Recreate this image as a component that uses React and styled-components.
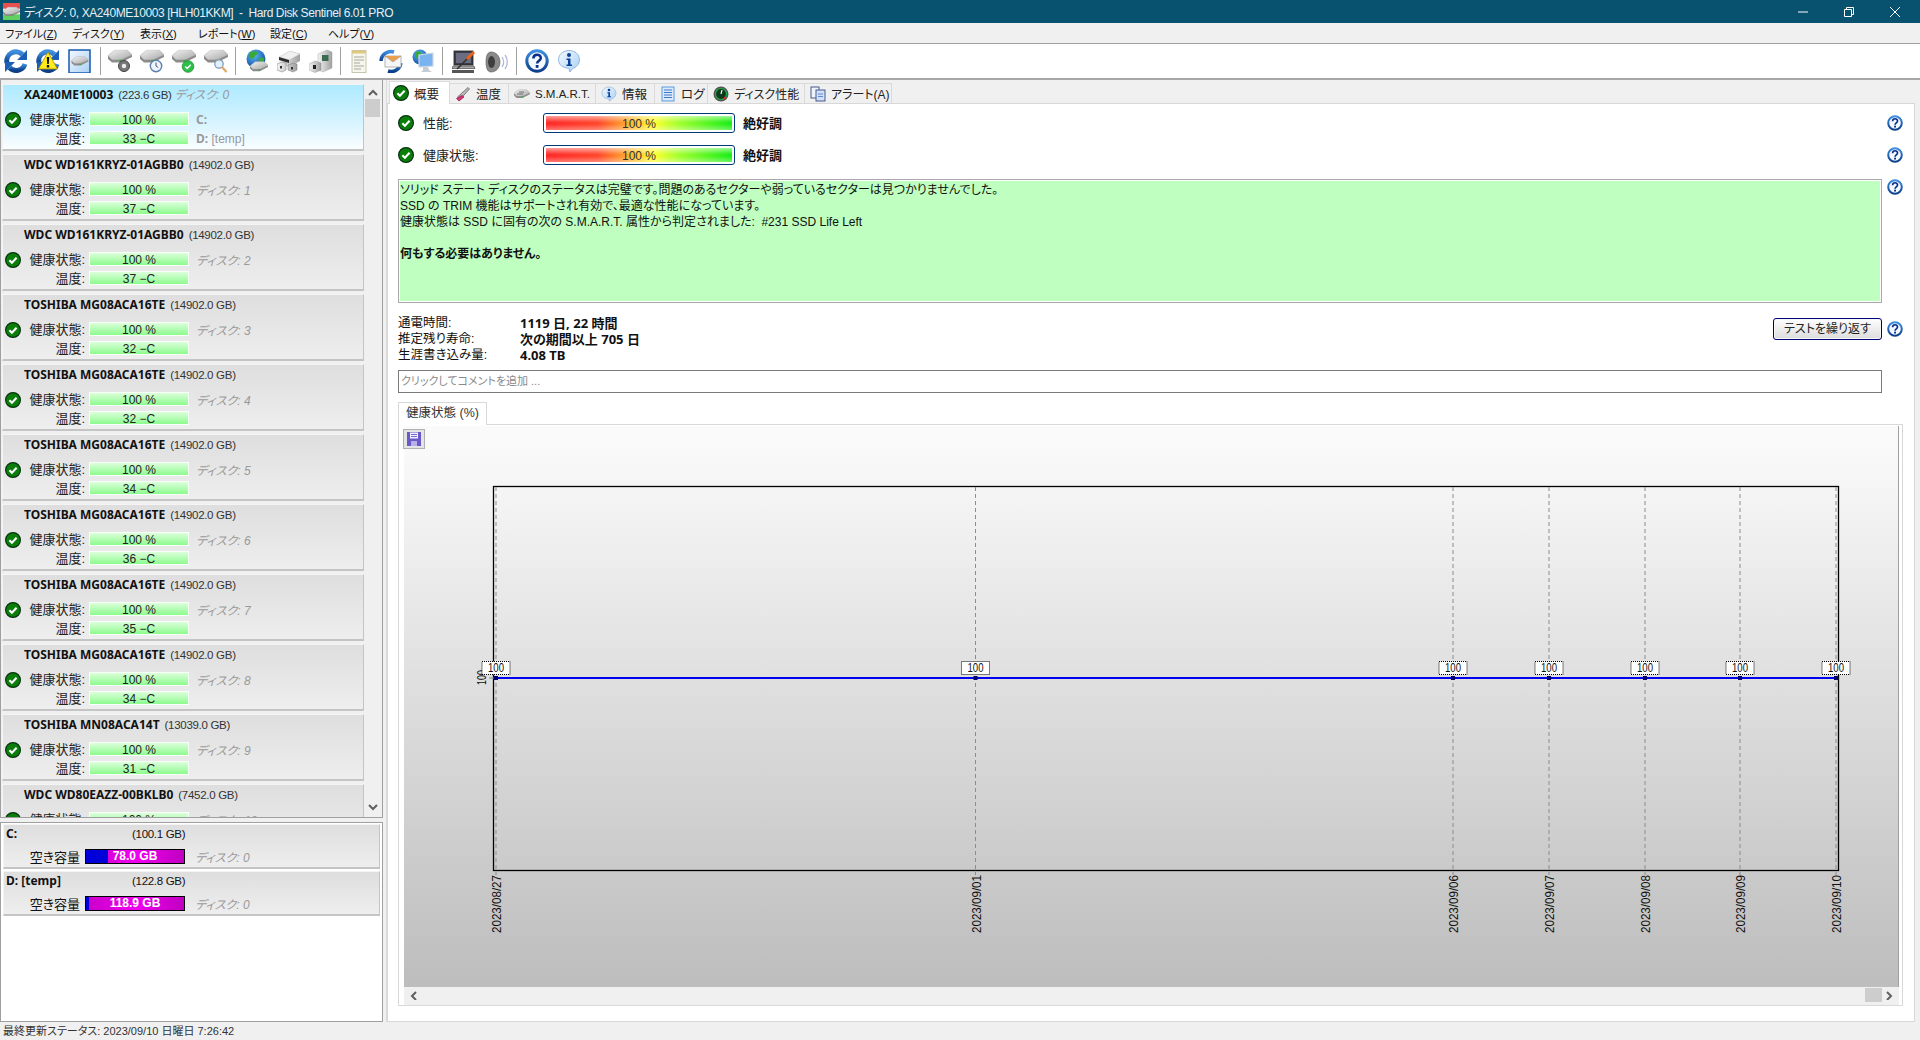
import React from 'react'
import styled, { createGlobalStyle } from 'styled-components'

const GlobalStyle = createGlobalStyle`
  html, body { margin: 0; padding: 0; background: #f0f0f0; overflow: hidden; }
  body {
    font-family: 'Liberation Sans', 'Noto Sans CJK JP', sans-serif;
    font-size: 12px;
    color: #111;
    font-feature-settings: "palt";
  }
  * { box-sizing: border-box; }
`

const Window = styled.div`
  width: 1920px;
  height: 1040px;
  display: flex;
  flex-direction: column;
  overflow: hidden;
`

/// title bar
const TitleBar = styled.div`
  height: 23px;
  background: #08516f;
  color: #e8eef2;
  display: flex;
  align-items: center;
  padding: 0 2px 0 3px;
  font-size: 12px;
  flex: none;
`
const TitleText = styled.span`
  margin-left: 4px;
  white-space: pre;
  letter-spacing: -0.4px;
  flex: 1;
`
const WinButton = styled.div`
  width: 46px;
  height: 20px;
  display: flex;
  align-items: center;
  justify-content: center;
`

/// menu
const MenuBar = styled.div`
  height: 21px;
  flex: none;
  background: #f0f0f0;
  border-bottom: 1px solid #a0a0a0;
  display: flex;
  align-items: center;
  padding-left: 5px;
  font-size: 11px;
`
const MenuItem = styled.span`
  width: ${({ $w }) => $w}px;
  white-space: nowrap;
  u { text-underline-offset: 1px; }
`

/// toolbar
const Toolbar = styled.div`
  height: 36px;
  flex: none;
  background: #fff;
  border-bottom: 2px solid #a8a8a8;
  display: flex;
  align-items: center;
  padding-left: 4px;
`
const Tool = styled.div`
  width: 24px;
  height: 24px;
  margin-right: 8.2px;
  flex: none;
  svg { display: block; }
`
const ToolSep = styled.div`
  width: 1px;
  height: 28px;
  background: #a0a0a0;
  margin: 0 ${({ $gap }) => $gap}px 0 -1px;
  flex: none;
`

/// main layout
const Main = styled.div`
  flex: 1;
  display: flex;
  min-height: 0;
`
const LeftColumn = styled.div`
  width: 383px;
  flex: none;
  display: flex;
  flex-direction: column;
`
const DiskPanel = styled.div`
  height: 738px;
  flex: none;
  display: flex;
  background: #f0f0f0;
  border: 1px solid #a0a0a0;
  border-top: none;
  overflow: hidden;
`
const DiskList = styled.div`
  width: 364px;
  padding: 4px 1px 0 1px;
  flex: none;
  overflow: hidden;
`
const Card = styled.div`
  height: 67px;
  margin-bottom: 3px;
  position: relative;
  padding: 1px 0 0 21px;
  border: 1px solid #f4f4f4;
  border-right-color: #c4c4c4;
  border-bottom: 2px solid #c4c4c4;
  background: ${({ $active }) =>
    $active
      ? 'linear-gradient(#aeeaff, #d8f4ff 60%, #fafeff)'
      : 'linear-gradient(#dedede, #eeeeee)'};
`
const CardTitle = styled.div`
  height: 17px;
  line-height: 17px;
  white-space: nowrap;
`
const Bold = styled.b`
  font-family: 'Noto Sans', 'Noto Sans CJK JP', sans-serif;
  font-weight: 700;
`
const Size = styled.span`
  margin-left: 5px;
  color: #333;
  font-size: 11.5px;
  letter-spacing: -0.3px;
`
const DiskNo = styled.span`
  font-style: italic;
  color: #9a9a9a;
  margin-left: ${({ $ml }) => $ml || 0}px;
`
const MetricRow = styled.div`
  display: flex;
  align-items: center;
  height: 14px;
  margin-top: ${({ $mt }) => $mt}px;
  margin-left: -20px;
`
const MetricLabel = styled.span`
  width: 81px;
  margin-top: -2px;
  text-align: right;
  color: #222;
  font-size: 13px;
  white-space: nowrap;
`
const MetricBar = styled.div`
  width: 100px;
  height: 14px;
  margin-left: 4px;
  border: 1px solid #f8fff8;
  background: linear-gradient(#dcffdc, #8dfb8d);
  text-align: center;
  line-height: 14px;
  font-size: 12px;
  color: #222;
  flex: none;
`
const CardNote = styled.span`
  margin-left: 7px;
  color: #999;
  white-space: nowrap;
`
const CardCheck = styled.div`
  position: absolute;
  left: 2px;
  top: 27px;
`
const Scrollbar = styled.div`
  width: 18px;
  flex: none;
  background: #f0f0f0;
  display: flex;
  flex-direction: column;
  align-items: center;
  justify-content: space-between;
  padding: 8px 3px 5px 0;
  position: relative;
`
const ScrollThumb = styled.div`
  position: absolute;
  top: 19px;
  left: 0;
  width: 15px;
  height: 18px;
  background: #cdcdcd;
`
const VolumePanel = styled.div`
  margin-top: 4px;
  flex: 1;
  background: #fff;
  border: 1px solid #a0a0a0;
  padding: 1px 2px 0;
`
const VolumeCard = styled.div`
  height: 45px;
  margin-bottom: 2px;
  padding: 1px 2px 0 2px;
  border: 1px solid #f4f4f4;
  border-right-color: #c4c4c4;
  border-bottom: 2px solid #c4c4c4;
  background: linear-gradient(#dedede, #eeeeee);
`
const VolumeTop = styled.div`
  display: flex;
  height: 16px;
  line-height: 16px;
  span { font-size: 11.5px; letter-spacing: -0.3px; }
`
const VolumeName = styled(Bold)`
  width: 126px;
`
const VolumeBottom = styled.div`
  display: flex;
  align-items: center;
  margin-top: 7px;
  height: 15px;
`
const VolumeLabel = styled.span`
  width: 74px;
  text-align: right;
  font-size: 13px;
`
const SpaceBar = styled.div`
  width: 100px;
  height: 15px;
  margin: 0 10px 0 5px;
  border: 1px solid #000;
  background: linear-gradient(90deg, #c800c8, #f000f0 50%, #c000c0);
  position: relative;
  text-align: center;
  line-height: 13px;
  color: #fff;
  font-weight: 700;
  flex: none;
  span { position: relative; }
`
const SpaceUsed = styled.div`
  position: absolute;
  left: 0;
  top: 0;
  bottom: 0;
  background: #0000d8;
`

/// right side
const RightColumn = styled.div`
  flex: 1;
  min-width: 0;
  margin-left: 3px;
  padding-right: 5px;
  display: flex;
  flex-direction: column;
  border-left: 1px solid #dcdcdc;
`
const Tabs = styled.div`
  height: 23px;
  flex: none;
  display: flex;
  align-items: flex-end;
  padding-left: 2px;
`
const Tab = styled.div`
  width: ${({ $w }) => $w}px;
  height: ${({ $active }) => ($active ? 23 : 20)}px;
  flex: none;
  display: flex;
  align-items: center;
  gap: 5px;
  padding-left: ${({ $active }) => ($active ? 3 : 5)}px;
  background: ${({ $active }) => ($active ? '#fff' : '#f0f0f0')};
  border: 1px solid #dadada;
  border-left: ${({ $active }) => ($active ? '1px solid #dadada' : 'none')};
  border-bottom: none;
  white-space: nowrap;
  position: relative;
  top: ${({ $active }) => ($active ? 1 : 0)}px;
  color: #222;
  font-size: ${({ $fs }) => $fs}px;
`
const Content = styled.div`
  flex: 1;
  background: #fff;
  border: 1px solid #d8d8d8;
  padding: 9px 11px 15px 10px;
  display: flex;
  flex-direction: column;
  min-height: 0;
`
const StatusRow = styled.div`
  display: flex;
  align-items: center;
  height: 20px;
  margin-bottom: 12px;
`
const StatusLabel = styled.span`
  margin: -2px 0 0 9px;
  width: 120px;
  color: #222;
  font-size: 13px;
`
const GradientBar = styled.div`
  width: 192px;
  height: 20px;
  border: 1px solid #003a75;
  border-radius: 3px;
  padding: 2px;
  background: #fff;
  flex: none;
`
const GradientFill = styled.div`
  height: 100%;
  background:
    linear-gradient(rgba(255,255,255,.55), rgba(255,255,255,0) 45%, rgba(255,255,255,0) 60%, rgba(255,255,255,.35)),
    linear-gradient(90deg, #ff2b2b, #ff4a2e 28%, #ffa030 42%, #ffff30 58%, #a0ff30 72%, #18ee18);
  text-align: center;
  line-height: 16px;
  color: #333;
`
const Verdict = styled.b`
  margin: -2px 0 0 8px;
  font-size: 13px;
  flex: 1;
`
const HelpSlot = styled.div`
  width: 16px;
  height: 16px;
  flex: none;
`
const MessageRow = styled.div`
  display: flex;
  align-items: flex-start;
  gap: 5px;
  height: 124px;
  flex: none;
  margin-top: 2px;
`
const MessageBox = styled.div`
  flex: 1;
  height: 124px;
  background: #bfffbf;
  border: 1px solid #a8a8a8;
  box-shadow: inset 0 0 0 1px #fff;
  padding: 2px 1px;
  line-height: 16px;
  font-size: 12px;
  white-space: pre;
`
const StatsRow = styled.div`
  display: flex;
  margin-top: 12px;
  height: 47px;
  flex: none;
`
const Stats = styled.div`
  display: grid;
  grid-template-columns: 122px auto;
  grid-auto-rows: 16px;
  line-height: 16px;
  flex: 1;
  font-size: 12.5px;
  b {
    font-family: 'Noto Sans', 'Noto Sans CJK JP', sans-serif;
    font-weight: 700;
    font-size: 13px;
  }
`
const RetestButton = styled.div`
  width: 109px;
  height: 22px;
  margin-top: 3px;
  border: 1px solid #00007a;
  border-radius: 3px;
  background: linear-gradient(#fefefe, #dcdcdc);
  text-align: center;
  line-height: 20px;
  color: #222;
  box-shadow: inset 0 0 0 1px #f6f6f6;
`
const RetestHelp = styled(HelpSlot)`
  margin: 6px 0 0 5px;
`
const CommentInput = styled.div`
  width: 1484px;
  height: 23px;
  margin-top: 8px;
  flex: none;
  border: 1px solid #7a7a7a;
  line-height: 21px;
  padding-left: 2px;
  color: #8a8a8a;
  font-size: 11px;
`
const ChartTab = styled.div`
  width: 89px;
  height: 23px;
  margin-top: 8px;
  flex: none;
  background: #fff;
  border: 1px solid #d8d8d8;
  border-bottom: none;
  text-align: center;
  line-height: 21px;
  position: relative;
  top: 1px;
  color: #333;
  font-size: 12.5px;
`
const ChartPane = styled.div`
  flex: 1;
  width: 1505px;
  border: 1px solid #d8d8d8;
  padding: 1px 3px 0 5px;
  display: flex;
  flex-direction: column;
  min-height: 0;
`
const ChartArea = styled.div`
  height: 561px;
  flex: none;
  position: relative;
  border-right: 1px solid #a0a0a0;
  background: linear-gradient(#fafafa 3%, #bdbdbd);
  svg { display: block; }
`
const SaveButton = styled.div`
  position: absolute;
  left: -1px;
  top: 3px;
  width: 22px;
  height: 20px;
  border: 1px solid #b0b0b0;
  background: #e4e4e4;
  display: flex;
  align-items: center;
  justify-content: center;
`
const HScroll = styled.div`
  flex: 1;
  background: #f0f0f0;
  display: flex;
  align-items: center;
  justify-content: space-between;
  padding: 0 5px 2px;
  position: relative;
`
const HThumb = styled.div`
  position: absolute;
  right: 17px;
  top: 1px;
  width: 17px;
  height: 14px;
  background: #cdcdcd;
`
const StatusBar = styled.div`
  height: 18px;
  flex: none;
  background: #f0f0f0;
  padding-left: 3px;
  line-height: 18px;
  color: #333;
  font-size: 11px;
`
const Defs = styled.svg`
  position: absolute;
  width: 0;
  height: 0;
`

/// icons
const IconDefs = () => (
  <Defs>
    <defs>
      <linearGradient id="hddTop" x1="0" y1="0" x2="1" y2="1">
        <stop offset="0" stopColor="#f2f2f2" />
        <stop offset="1" stopColor="#a8a8a8" />
      </linearGradient>
      <linearGradient id="blueArc" x1="0" y1="0" x2="0" y2="1">
        <stop offset="0" stopColor="#3f8fe0" />
        <stop offset="1" stopColor="#0b3f8a" />
      </linearGradient>
      <radialGradient id="globe" cx=".4" cy=".3" r=".8">
        <stop offset="0" stopColor="#5ab8f5" />
        <stop offset="1" stopColor="#0a3f9a" />
      </radialGradient>
      <linearGradient id="deskBlue" x1="0" y1="0" x2="1" y2="1">
        <stop offset="0" stopColor="#f4f9ff" />
        <stop offset="1" stopColor="#a8d0f4" />
      </linearGradient>
      <linearGradient id="greyBox" x1="0" y1="0" x2="1" y2="0">
        <stop offset="0" stopColor="#f4f4f4" />
        <stop offset="1" stopColor="#a0a0a0" />
      </linearGradient>
    </defs>
  </Defs>
)

const Check = ({ size = 16 }) => (
  <svg width={size} height={size} viewBox="0 0 16 16">
    <circle cx="8" cy="8" r="7.4" fill="#0a7d0a" stroke="#07340f" strokeWidth="1.2" />
    <path d="M4.4 8.2l2.5 2.5 4.7-5" fill="none" stroke="#fff" strokeWidth="2.1" />
  </svg>
)

const Help = ({ size = 16 }) => (
  <svg width={size} height={size} viewBox="0 0 24 24">
    <circle cx="12" cy="12" r="10.2" fill="#f4f8ff" stroke="url(#blueArc)" strokeWidth="3" />
    <path d="M8.4 9.4c0-5 7.4-4.8 7.4-.4 0 2.8-3.7 2.8-3.7 5.6" fill="none" stroke="#0a2f8a" strokeWidth="2.5" />
    <rect x="10.7" y="16" width="2.8" height="2.8" fill="#0a2f8a" />
  </svg>
)

const InfoBubble = ({ size = 24 }) => (
  <svg width={size} height={size} viewBox="0 0 24 24">
    <path d="M12 1.5c6 0 10.5 4 10.5 9.3 0 4.4-3.2 7.5-6.8 8.6L13 23l-1.2-3.7C5.600 19 1.500 15.500 1.500 10.800 1.500 5.500 6 1.500 12 1.500z" fill="url(#deskBlue)" stroke="#7aa8d8" strokeWidth=".8" />
    <circle cx="12" cy="6" r="2" fill="#0a3f9a" />
    <path d="M9.500 9.500H13.500V15.500H15V17H9.500V15.500H11V11H9.500z" fill="#0a3f9a" />
  </svg>
)

const HddShape = ({ x = 0, y = 0, s = 1 }) => (
  <g transform={`translate(${x} ${y}) scale(${s})`}>
    <path d="M0 6.500L7 1h12l5 4.500V8L13 13.500H4L0 10z" fill="#8c8c8c" />
    <path d="M0 6.500L7 1h12l5 4.500L13 10.500H4z" fill="url(#hddTop)" stroke="#c4c4c4" strokeWidth=".4" />
    <rect x="11.500" y="10.800" width="1.800" height="2" fill="#28b028" />
  </g>
)

const Arrows = () => (
  <g>
    <path d="M3 14A9.200 9.200 0 0 1 18.500 5.500" fill="none" stroke="url(#blueArc)" strokeWidth="5" />
    <path d="M21 15A9.200 9.200 0 0 1 5.500 18.500" fill="none" stroke="url(#blueArc)" strokeWidth="5" />
    <path d="M23 1v10h-10zM1 23V13h10z" fill="#1c5fb8" />
  </g>
)

const ToolIcon = ({ kind }) => {
  const body = {
    refresh: <Arrows />,
    warn: (
      <>
        <Arrows />
        <path d="M12 3l9.500 17h-19z" fill="#ffec1a" stroke="#b08a00" strokeWidth=".8" />
        <path d="M10.800 8h2.400l-.4 7h-1.600zM10.800 16h2.400v2.400h-2.400z" fill="#111" />
      </>
    ),
    disk: (
      <>
        <rect x="1" y="1" width="21" height="23" fill="url(#deskBlue)" stroke="#1a58b0" strokeWidth="1.500" />
        <HddShape x="3.500" y="7" s=".7" />
      </>
    ),
    hddGear: (
      <>
        <HddShape />
        <circle cx="16" cy="17" r="5.500" fill="#777" stroke="#444" strokeWidth="1" />
        <circle cx="16" cy="17" r="2.200" fill="#eee" />
      </>
    ),
    hddClock: (
      <>
        <HddShape />
        <circle cx="16" cy="17" r="5.700" fill="#eef4ff" stroke="#5a82ac" strokeWidth="1.400" />
        <path d="M16 13.500V17l2.200 1.500" fill="none" stroke="#445" strokeWidth=".9" />
      </>
    ),
    hddCheck: (
      <>
        <HddShape />
        <circle cx="16" cy="17.500" r="5.800" fill="#2cc04a" stroke="#1a8a30" strokeWidth=".8" />
        <path d="M13.200 17.500l2 2 3.500-3.800" fill="none" stroke="#fff" strokeWidth="1.500" />
      </>
    ),
    hddSearch: (
      <>
        <HddShape />
        <circle cx="15" cy="15" r="4.200" fill="#dff0ff" stroke="#8a9ab0" strokeWidth="1.300" />
        <path d="M18 18l4.500 5" stroke="#e0a860" strokeWidth="2.200" />
      </>
    ),
    globeHdd: (
      <>
        <circle cx="12" cy="10" r="9.500" fill="url(#globe)" />
        <path d="M7 3c3-1.500 6-1 7 1 .5 2-3 2-3.500 4-.5 2.500-4 2-5.500 0-1-1.500 0-3.500 2-5zM15 9c2-1 5-.5 5.500 1-.5 3-2 5-4 5-1.500-1-2.500-4-1.500-6z" fill="#3aa83a" />
        <HddShape x="6" y="12" s=".75" />
      </>
    ),
    server: (
      <>
        <path d="M2 8L13 2l10 3v7L12 18 2 15z" fill="url(#greyBox)" />
        <path d="M2 8L13 2l10 3-11 6z" fill="#f0f0f0" stroke="#bbb" strokeWidth=".4" />
        <path d="M2 8l10 3v3L2 11z" fill="#2e2e2e" />
        <path d="M0 15l5-2 4 1v7l-4 2-5-2zM11 16l5-2 4 1v6l-4 2-5-2z" fill="url(#greyBox)" stroke="#777" strokeWidth=".5" />
        <rect x="3" y="17" width="2" height="2.500" fill="#333" />
        <rect x="14" y="18" width="2" height="2.500" fill="#333" />
      </>
    ),
    tower: (
      <>
        <path d="M9 5l9-4 5 2v16l-9 4-5-2z" fill="url(#greyBox)" stroke="#999" strokeWidth=".4" />
        <rect x="13" y="6" width="6.500" height="6" fill="#3a6a50" />
        <path d="M0 15l6-3 6 2v7l-6 2.500-6-2.500z" fill="url(#greyBox)" stroke="#888" strokeWidth=".4" />
        <rect x="4" y="16" width="3" height="4" fill="#222" />
      </>
    ),
    note: (
      <>
        <rect x="5" y="1.500" width="14" height="22" fill="#f6f6ea" stroke="#b8b8a0" strokeWidth=".8" />
        <rect x="5" y="1.500" width="14" height="3" fill="#e0c880" />
        <path d="M7 8h10M7 11h10M7 14h6M7 17h10M7 20h7" stroke="#a8a8a8" strokeWidth="1" />
      </>
    ),
    mail: (
      <>
        <path d="M2 12A10 10 0 0 1 15 3" fill="none" stroke="url(#blueArc)" strokeWidth="3.500" />
        <path d="M22 14A10 10 0 0 1 9 22" fill="none" stroke="url(#blueArc)" strokeWidth="3.500" />
        <rect x="6" y="7" width="16" height="11" fill="#f6f6f6" stroke="#999" strokeWidth=".7" />
        <path d="M6 7l8 6 8-6" fill="#e8a050" stroke="#999" strokeWidth=".6" />
      </>
    ),
    globeMonitor: (
      <>
        <circle cx="9" cy="8" r="7.500" fill="url(#globe)" />
        <path d="M5 3c2-1.500 5-1 5 1s-3 2-3 4-3 1-3-1 0-3 1-4z" fill="#3aa83a" />
        <path d="M8 6l14-2v13L8 18z" fill="#7ab4f0" stroke="#d0d8e0" strokeWidth="1.200" />
        <path d="M12 18l5 0 1 3 3 2H10l2-2z" fill="#c8ccd4" />
      </>
    ),
    laptop: (
      <>
        <rect x="2" y="2" width="19" height="14" fill="#3c3c4a" stroke="#222" strokeWidth=".8" />
        <rect x="4" y="4" width="15" height="10" fill="#6c6c80" />
        <path d="M1 17h21l1 2.500H0z" fill="#aaa" stroke="#333" strokeWidth=".6" />
        <path d="M0 21h22v3H0z" fill="#555" />
        <path d="M5 20L17 8" stroke="#333" strokeWidth="1.600" />
        <path d="M15 10l7-7" stroke="#e8641a" strokeWidth="3" />
      </>
    ),
    speaker: (
      <>
        <path d="M6 3c5 0 9 4 9 10s-4 10-9 10C2 23 1 18 1 13S2 3 6 3z" fill="#8a8a8a" stroke="#555" strokeWidth=".6" />
        <ellipse cx="6.500" cy="13" rx="3.500" ry="6" fill="#3e3e3e" />
        <path d="M17 8c2 3 2 7 0 10M20 6c3 4 3 10 0 14" fill="none" stroke="#b0b8d8" strokeWidth="1.300" />
      </>
    ),
  }[kind]
  return (
    <svg width="24" height="24" viewBox="0 0 24 24">
      {body}
    </svg>
  )
}

const TabIcon = ({ kind }) => {
  if (kind === 'check') return <Check />
  if (kind === 'thermo')
    return (
      <svg width="16" height="16" viewBox="0 0 16 16">
        <path d="M13 1.500l1.500 1.500L5 13.500 2.500 11z" fill="#b8b8b8" stroke="#666" strokeWidth=".8" />
        <path d="M7 9.500l2 1.500-5 4-2.500-2.500z" fill="#d8387c" stroke="#802" strokeWidth=".6" />
      </svg>
    )
  if (kind === 'hdd')
    return (
      <svg width="16" height="16" viewBox="0 0 16 16">
        <g transform="translate(0 3) scale(.66)">
          <HddShape />
        </g>
        <path d="M3 8h6M5 6h5" stroke="#555" strokeWidth=".8" />
      </svg>
    )
  if (kind === 'info') return <InfoBubble size={16} />
  if (kind === 'doc')
    return (
      <svg width="16" height="16" viewBox="0 0 16 16">
        <rect x="2" y="1" width="12" height="14" fill="#dcebfb" stroke="#5a9ae0" />
        <path d="M4 4h8M4 6.500h8M4 9h8M4 11.500h8" stroke="#3a78c8" />
      </svg>
    )
  if (kind === 'gauge')
    return (
      <svg width="16" height="16" viewBox="0 0 16 16">
        <circle cx="8" cy="8" r="7.500" fill="#555" />
        <circle cx="8" cy="8" r="5.500" fill="#0c3a1c" stroke="#20b040" strokeWidth="1.200" />
        <path d="M8 8l1-4" stroke="#fff" strokeWidth="1.200" />
        <circle cx="12" cy="12" r="1.200" fill="#e02020" />
      </svg>
    )
  return (
    <svg width="16" height="16" viewBox="0 0 16 16">
      <rect x="1" y="1" width="8" height="11" fill="#eef2fa" stroke="#4a5a8a" />
      <rect x="6" y="4" width="9" height="11" fill="#cfe0f8" stroke="#4a5a8a" />
      <path d="M8 8h5M8 10.500h5" stroke="#5a8ad0" />
    </svg>
  )
}

const ScrollArrow = ({ dir }) => {
  const points = {
    up: 'M1 6l4-4 4 4',
    down: 'M1 2l4 4 4-4',
    left: 'M7 1L3 5l4 4',
    right: 'M3 1l4 4-4 4',
  }[dir]
  return (
    <svg width="10" height="10" viewBox="0 0 10 8" style={{ flex: 'none' }}>
      <path d={points} fill="none" stroke="#606060" strokeWidth="2" />
    </svg>
  )
}

/// data
const disks = [
  { name: 'XA240ME10003', size: '223.6 GB', temp: 33, no: 0, active: true },
  { name: 'WDC WD161KRYZ-01AGBB0', size: '14902.0 GB', temp: 37, no: 1 },
  { name: 'WDC WD161KRYZ-01AGBB0', size: '14902.0 GB', temp: 37, no: 2 },
  { name: 'TOSHIBA MG08ACA16TE', size: '14902.0 GB', temp: 32, no: 3 },
  { name: 'TOSHIBA MG08ACA16TE', size: '14902.0 GB', temp: 32, no: 4 },
  { name: 'TOSHIBA MG08ACA16TE', size: '14902.0 GB', temp: 34, no: 5 },
  { name: 'TOSHIBA MG08ACA16TE', size: '14902.0 GB', temp: 36, no: 6 },
  { name: 'TOSHIBA MG08ACA16TE', size: '14902.0 GB', temp: 35, no: 7 },
  { name: 'TOSHIBA MG08ACA16TE', size: '14902.0 GB', temp: 34, no: 8 },
  { name: 'TOSHIBA MN08ACA14T', size: '13039.0 GB', temp: 31, no: 9 },
  { name: 'WDC WD80EAZZ-00BKLB0', size: '7452.0 GB', temp: 33, no: 10 },
]

const volumes = [
  { name: 'C:', size: '100.1 GB', free: '78.0 GB', used: 22 },
  { name: 'D: [temp]', size: '122.8 GB', free: '118.9 GB', used: 3 },
]

const toolGroups = [
  { gap: 7, icons: ['refresh', 'warn', 'disk'] },
  { gap: 8, icons: ['hddGear', 'hddClock', 'hddCheck', 'hddSearch'] },
  { gap: 6, icons: ['globeHdd', 'server', 'tower'] },
  { gap: 9, icons: ['note', 'mail', 'globeMonitor'] },
  { gap: 8, icons: ['laptop', 'speaker'] },
]

const menus = [
  ['ファイル', 'Z', 67],
  ['ディスク', 'Y', 68],
  ['表示', 'X', 58],
  ['レポート', 'W', 72],
  ['設定', 'C', 58],
  ['ヘルプ', 'V', 60],
]

const tabs = [
  ['check', '概要', 61, 12.5, true],
  ['thermo', '温度', 59, 12.5],
  ['hdd', 'S.M.A.R.T.', 87, 11.5],
  ['info', '情報', 59, 12.5],
  ['doc', 'ログ', 53, 12.5],
  ['gauge', 'ディスク性能', 97, 12],
  ['docs', 'アラート(A)', 87, 12],
]

const chartDates = [
  [92, '2023/08/27'],
  [571.500, '2023/09/01'],
  [1049, '2023/09/06'],
  [1145, '2023/09/07'],
  [1241, '2023/09/08'],
  [1336, '2023/09/09'],
  [1432, '2023/09/10'],
]

const Chart = () => (
  <svg width="1494" height="561" viewBox="0 0 1494 561" fontFamily="'Liberation Sans', sans-serif" fontSize="12">
    <rect x="89.500" y="60.500" width="1345" height="384" fill="none" stroke="#000" strokeWidth="1.300" />
    {chartDates.map(([x, date]) => (
      <g key={date}>
        <path d={`M${x} 61V449`} stroke="#8c8c8c" strokeDasharray="4 3" fill="none" />
        <text
          transform={`translate(${x + 5} 507) rotate(-90)`}
          textLength="58"
          lengthAdjust="spacingAndGlyphs"
          fill="#111"
        >
          {date}
        </text>
      </g>
    ))}
    <path d="M85 252H92" stroke="#888" />
    <text transform="translate(82 259) rotate(-90)" textLength="15" lengthAdjust="spacingAndGlyphs" fill="#111">
      100
    </text>
    <rect x="92" y="251" width="1340" height="2" fill="#0000f0" />
    {chartDates.map(([x, date]) => (
      <g key={date}>
        <rect x={x - 2} y="250" width="4" height="4" fill="#00006a" />
        <rect x={x - 14} y="235.500" width="28" height="13" fill="#fff" stroke="#000" strokeDasharray="1 1" />
        <text x={x} y="246" textAnchor="middle" textLength="16" lengthAdjust="spacingAndGlyphs" fill="#111">
          100
        </text>
      </g>
    ))}
  </svg>
)

const App = () => (
  <Window>
    <GlobalStyle />
    <IconDefs />
    <TitleBar>
      <svg width="17" height="17" viewBox="0 0 24 24">
        <rect width="24" height="24" fill="#f4f4f4" />
        <rect width="24" height="8" fill="#e85050" />
        <rect y="16" width="24" height="8" fill="#60d060" />
        <HddShape y="5" />
      </svg>
      <TitleText>ディスク: 0, XA240ME10003 [HLH01KKM]  -  Hard Disk Sentinel 6.01 PRO</TitleText>
      <WinButton>
        <svg width="10" height="10" viewBox="0 0 10 10">
          <path d="M0 5h10" stroke="#fff" />
        </svg>
      </WinButton>
      <WinButton>
        <svg width="10" height="10" viewBox="0 0 10 10">
          <path d="M.5 2.500h7v7h-7zM2.500 2.500V.5h7v7H7.500" fill="none" stroke="#fff" />
        </svg>
      </WinButton>
      <WinButton>
        <svg width="10" height="10" viewBox="0 0 10 10">
          <path d="M0 0l10 10M10 0L0 10" stroke="#fff" />
        </svg>
      </WinButton>
    </TitleBar>

    <MenuBar>
      {menus.map(([label, key, w]) => (
        <MenuItem key={key} $w={w}>
          {label}(<u>{key}</u>)
        </MenuItem>
      ))}
    </MenuBar>

    <Toolbar>
      {toolGroups.map((group) => (
        <React.Fragment key={group.icons[0]}>
          {group.icons.map((kind) => (
            <Tool key={kind}>
              <ToolIcon kind={kind} />
            </Tool>
          ))}
          <ToolSep $gap={group.gap} />
        </React.Fragment>
      ))}
      <Tool>
        <Help size={24} />
      </Tool>
      <Tool>
        <InfoBubble />
      </Tool>
    </Toolbar>

    <Main>
      <LeftColumn>
        <DiskPanel>
          <DiskList>
            {disks.map((d) => (
              <Card key={d.no} $active={d.active}>
                <CardCheck>
                  <Check />
                </CardCheck>
                <CardTitle>
                  <Bold>{d.name}</Bold>
                  <Size>({d.size})</Size>
                  <DiskNo $ml={d.active ? 3 : 0}>{d.active ? `ディスク: ${d.no}` : ''}</DiskNo>
                </CardTitle>
                <MetricRow $mt={9}>
                  <MetricLabel>健康状態:</MetricLabel>
                  <MetricBar>100 %</MetricBar>
                  <CardNote>
                    {d.active ? <Bold>C:</Bold> : <DiskNo>ディスク: {d.no}</DiskNo>}
                  </CardNote>
                </MetricRow>
                <MetricRow $mt={5}>
                  <MetricLabel>温度:</MetricLabel>
                  <MetricBar>{d.temp} −C</MetricBar>
                  {d.active && (
                    <CardNote>
                      <Bold>D:</Bold> [temp]
                    </CardNote>
                  )}
                </MetricRow>
              </Card>
            ))}
          </DiskList>
          <Scrollbar>
            <ScrollThumb />
            <ScrollArrow dir="up" />
            <ScrollArrow dir="down" />
          </Scrollbar>
        </DiskPanel>
        <VolumePanel>
          {volumes.map((v) => (
            <VolumeCard key={v.name}>
              <VolumeTop>
                <VolumeName>{v.name}</VolumeName>
                <span>({v.size})</span>
              </VolumeTop>
              <VolumeBottom>
                <VolumeLabel>空き容量</VolumeLabel>
                <SpaceBar>
                  <SpaceUsed style={{ width: `${v.used}%` }} />
                  <span>{v.free}</span>
                </SpaceBar>
                <DiskNo>ディスク: 0</DiskNo>
              </VolumeBottom>
            </VolumeCard>
          ))}
        </VolumePanel>
      </LeftColumn>

      <RightColumn>
        <Tabs>
          {tabs.map(([icon, label, w, fs, active]) => (
            <Tab key={label} $w={w} $fs={fs} $active={active}>
              <TabIcon kind={icon} />
              {label}
            </Tab>
          ))}
        </Tabs>
        <Content>
          {['性能:', '健康状態:'].map((label) => (
            <StatusRow key={label}>
              <Check />
              <StatusLabel>{label}</StatusLabel>
              <GradientBar>
                <GradientFill>100 %</GradientFill>
              </GradientBar>
              <Verdict>絶好調</Verdict>
              <HelpSlot>
                <Help />
              </HelpSlot>
            </StatusRow>
          ))}
          <MessageRow>
            <MessageBox>
              {'ソリッド ステート ディスクのステータスは完璧です。問題のあるセクターや弱っているセクターは見つかりませんでした。\nSSD の TRIM 機能はサポートされ有効で、最適な性能になっています。\n健康状態は SSD に固有の次の S.M.A.R.T. 属性から判定されました:  #231 SSD Life Left\n\n'}
              <b>何もする必要はありません。</b>
            </MessageBox>
            <HelpSlot>
              <Help />
            </HelpSlot>
          </MessageRow>
          <StatsRow>
            <Stats>
              <span>通電時間:</span>
              <b>1119 日, 22 時間</b>
              <span>推定残り寿命:</span>
              <b>次の期間以上 705 日</b>
              <span>生涯書き込み量:</span>
              <b>4.08 TB</b>
            </Stats>
            <RetestButton>テストを繰り返す</RetestButton>
            <RetestHelp>
              <Help />
            </RetestHelp>
          </StatsRow>
          <CommentInput>クリックしてコメントを追加 ...</CommentInput>
          <ChartTab>健康状態 (%)</ChartTab>
          <ChartPane>
            <ChartArea>
              <Chart />
              <SaveButton>
                <svg width="16" height="16" viewBox="0 0 16 16">
                  <path d="M1 1h14v14H1z" fill="#6a5ac8" />
                  <rect x="4" y="1.500" width="8" height="6" fill="#f0f0ff" />
                  <path d="M5 3.500h6M5 5.500h6" stroke="#7a6ad0" />
                  <rect x="5" y="10" width="6" height="5" fill="#b8b0e8" />
                </svg>
              </SaveButton>
            </ChartArea>
            <HScroll>
              <ScrollArrow dir="left" />
              <HThumb />
              <ScrollArrow dir="right" />
            </HScroll>
          </ChartPane>
        </Content>
      </RightColumn>
    </Main>

    <StatusBar>最終更新ステータス: 2023/09/10 日曜日 7:26:42</StatusBar>
  </Window>
)

export default App
